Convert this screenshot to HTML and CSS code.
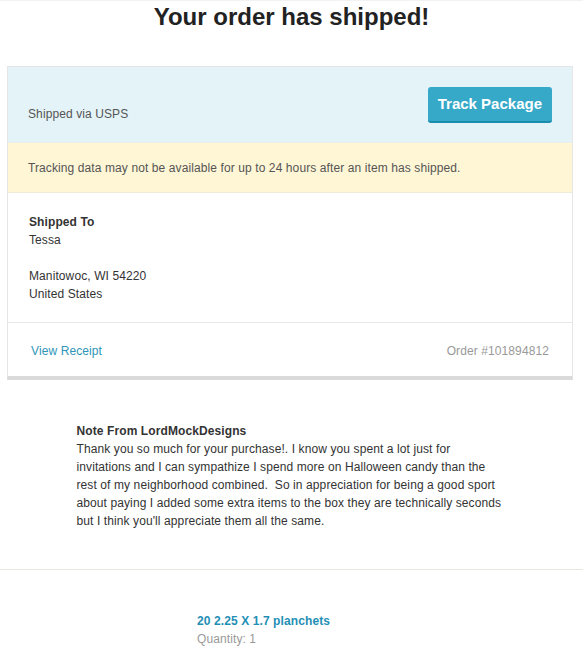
FILE: index.html
```html
<!DOCTYPE html>
<html>
<head>
	<title>Your order has shipped!</title>
	<meta name="viewport" content="width=device-width, initial-scale=1" />
	<link rel="stylesheet" href="styles.css">
</head>
<body>
	<h1 class="title">Your order has shipped!</h1>

	<div class="card">
		<div class="card-top">
			<span class="carrier">Shipped via USPS</span>
			<a class="btn-track" href="#">Track Package</a>
		</div>
		<div class="card-notice">
			Tracking data may not be available for up to 24 hours after an item has shipped.
		</div>
		<div class="card-body">
			<div class="label">Shipped To</div>
			<div>Tessa</div>
			<div>&nbsp;</div>
			<div>Manitowoc, WI 54220</div>
			<div>United States</div>
		</div>
		<div class="card-foot">
			<a class="link" href="#">View Receipt</a>
			<span class="order-num">Order #101894812</span>
		</div>
	</div>

	<div class="note">
		<div class="label">Note From LordMockDesigns</div>
		<p>Thank you so much for your purchase!. I know you spent a lot just for invitations and I can sympathize I spend more on Halloween candy than the rest of my neighborhood combined.&nbsp; So in appreciation for being a good sport about paying I added some extra items to the box they are technically seconds but I think you'll appreciate them all the same.</p>
	</div>

	<div class="items">
		<div class="item">
			<a class="item-name" href="#">20 2.25 X 1.7 planchets</a>
			<div class="item-qty">Quantity: 1</div>
		</div>
	</div>
</body>
</html>
```

FILE: styles.css
```css
body {
	margin: 0;
	border-top: 1px solid #f2f2f2;
	font-family: "Liberation Sans", Arial, sans-serif;
	font-size: 12px;
	line-height: 18px;
	letter-spacing: 0.1px;
	color: #444;
	background: #fff;
}

a {
	text-decoration: none;
}

.title {
	margin: 0;
	padding-top: 2px;
	text-align: center;
	font-size: 24px;
	line-height: 28px;
	letter-spacing: 0;
	color: #222;
}

.card {
	margin: 35px 10px 0 7px;
	border: 1px solid #e6e6e6;
	border-bottom: 4px solid #dadada;
}

.card-top {
	display: flex;
	justify-content: space-between;
	align-items: flex-start;
	height: 76px;
	padding: 0 20px 0 20px;
	background: #e4f3f8;
	border-bottom: 1px solid #e9efe8;
	box-sizing: border-box;
}

.carrier {
	margin-top: 38px;
	color: #555;
}

.btn-track {
	margin-top: 20px;
	padding: 0 10px;
	height: 34px;
	line-height: 34px;
	background: #36a9c8;
	border-bottom: 2px solid #1a8cad;
	border-radius: 3px;
	color: #fff;
	font-size: 15px;
	font-weight: bold;
	letter-spacing: 0;
}

.card-notice {
	padding: 16px 20px 15px;
	background: #fef6d5;
	color: #555;
	border-bottom: 1px solid #f0ebd8;
}

.card-body {
	padding: 20px 21px 19px;
	border-bottom: 1px solid #e8e8e8;
	color: #333;
}

.label {
	font-weight: bold;
	color: #333;
}

.card-foot {
	display: flex;
	justify-content: space-between;
	padding: 19px 23px 16px 23px;
}

.link {
	color: #2f95b8;
}

.order-num {
	color: #999;
}

.note {
	width: 428px;
	margin: 42px auto 0;
	padding: 0 2px 39px 0;
	color: #333;
}

.note p {
	margin: 0;
}

.items {
	border-top: 1px solid #e8e8e2;
	padding: 42px 0 0 197px;
}

.item-name {
	font-weight: bold;
	color: #1f8fb5;
}

.item-qty {
	color: #999;
}
```
